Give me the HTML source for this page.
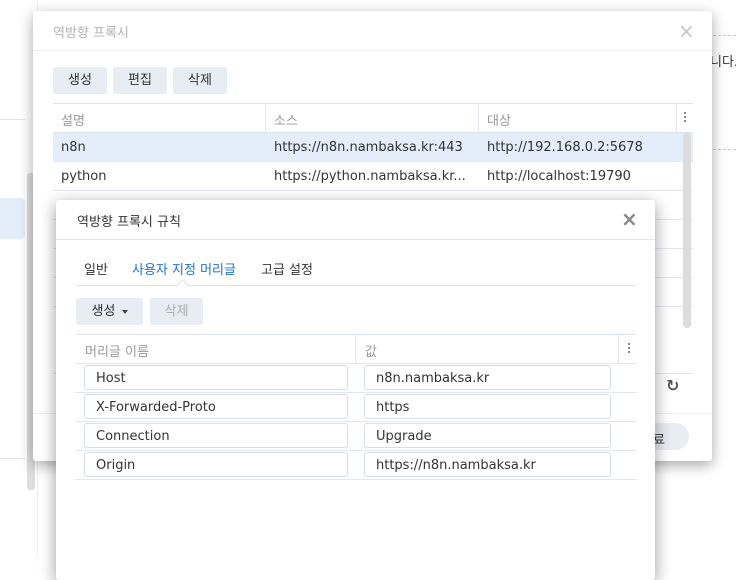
<!DOCTYPE html>
<html><head><meta charset="utf-8"><style>
*{box-sizing:border-box;margin:0;padding:0}
body{width:736px;height:557px;overflow:hidden;background:#fff;position:relative;font-family:"DejaVu Sans","Noto Sans CJK KR",sans-serif;font-size:13px;color:#333}
.a{position:absolute}
.btn{position:absolute;height:27px;background:#e8edf3;border-radius:3px;text-align:center;line-height:27px;font-size:13px;color:#333}
.hl{position:absolute;height:1px;background:#e3e8ee}
.vl{position:absolute;width:1px;background:#e3e8ee}
.inp{position:absolute;height:25px;border:1px solid #d5dde6;border-radius:3px;padding-left:11px;line-height:25px;font-size:13px;color:#333;background:#fff}
.txt{position:absolute;white-space:nowrap}
.dots{position:absolute;width:3px}
.dots i{display:block;width:2px;height:2px;background:#888;margin-bottom:2px}
</style></head><body>
<div class="vl" style="left:37px;top:0;height:557px;background:#eceff2"></div>
<div class="hl" style="left:0;top:119px;width:25px"></div>
<div class="a" style="left:0;top:198px;width:25px;height:41px;background:#e3eefa;border-radius:0 4px 4px 0"></div>
<div class="a" style="left:27px;top:173px;width:8px;height:317px;background:#ddd;border-radius:3px"></div>
<div class="hl" style="left:0;top:458px;width:25px"></div>
<div class="txt" style="left:710px;top:51px;color:#333">니다.</div>
<div class="a" style="left:713px;top:35px;width:23px;border-top:1px dashed #ccc"></div>
<div class="a" style="left:713px;top:149px;width:23px;border-top:1px dashed #ccc"></div>

<div class="a" style="left:33px;top:11px;width:679px;height:450px;background:#fff;border-radius:3px;box-shadow:0 4px 14px rgba(0,0,0,.35)">
  <div class="txt" style="left:20px;top:11px;color:#b0b0b0">역방향 프록시</div>
  <div class="txt" style="left:645px;top:8px;color:#c4c4c4;font-size:20px">×</div>
  <div class="hl" style="left:0;top:39px;width:679px;background:#eef1f4"></div>
  <div class="btn" style="left:20px;top:56px;width:54px">생성</div>
  <div class="btn" style="left:80px;top:56px;width:54px">편집</div>
  <div class="btn" style="left:140px;top:56px;width:54px">삭제</div>
  <div class="hl" style="left:20px;top:92px;width:640px;background:#dde3ea"></div>
  <div class="txt" style="left:28px;top:99px;color:#999">설명</div>
  <div class="txt" style="left:241px;top:99px;color:#999">소스</div>
  <div class="txt" style="left:454px;top:99px;color:#999">대상</div>
  <div class="dots" style="left:651px;top:101px"><i></i><i></i><i></i></div>
  <div class="vl" style="left:232px;top:92px;height:29px"></div>
  <div class="vl" style="left:445px;top:92px;height:29px"></div>
  <div class="vl" style="left:643px;top:92px;height:29px"></div>
  <div class="a" style="left:20px;top:121px;width:640px;height:29px;background:#e3eefa;border-top:1px solid #dde3ea"></div>
  <div class="txt" style="left:28px;top:129px">n8n</div>
  <div class="txt" style="left:241px;top:129px">https://n8n.nambaksa.kr:443</div>
  <div class="txt" style="left:454px;top:129px">http://192.168.0.2:5678</div>
  <div class="hl" style="left:20px;top:150px;width:640px"></div>
  <div class="txt" style="left:28px;top:158px">python</div>
  <div class="txt" style="left:241px;top:158px">https://python.nambaksa.kr...</div>
  <div class="txt" style="left:454px;top:158px">http://localhost:19790</div>
  <div class="hl" style="left:20px;top:179px;width:640px"></div>
  <div class="hl" style="left:20px;top:208px;width:640px"></div>
  <div class="hl" style="left:20px;top:237px;width:640px"></div>
  <div class="hl" style="left:20px;top:266px;width:640px"></div>
  <div class="hl" style="left:20px;top:295px;width:640px"></div>
  <div class="a" style="left:650px;top:122px;width:8px;height:195px;background:#dcdcdc;border-radius:4px"></div>
  <div class="hl" style="left:20px;top:362px;width:640px"></div>
  <div class="txt" style="left:633px;top:365px;font-size:16px;font-weight:bold;color:#555">↻</div>
  <div class="hl" style="left:0;top:402px;width:679px;background:#eef1f4"></div>
  <div class="a" style="left:560px;top:412px;width:96px;height:27px;background:#e8edf3;border-radius:14px"></div>
  <div class="txt" style="left:620px;top:418px">료</div>
</div>

<div class="a" style="left:56px;top:200px;width:599px;height:380px;background:#fff;border-radius:3px;box-shadow:0 4px 16px rgba(0,0,0,.4)">
  <div class="txt" style="left:21px;top:11px;color:#333">역방향 프록시 규칙</div>
  <div class="txt" style="left:565px;top:7px;color:#888;font-size:20px;font-weight:bold">×</div>
  <div class="hl" style="left:0;top:39px;width:599px;background:#e3e8ee"></div>
  <div class="txt" style="left:28px;top:59px;color:#333">일반</div>
  <div class="txt" style="left:76px;top:59px;color:#1a73d9">사용자 지정 머리글</div>
  <div class="txt" style="left:205px;top:59px;color:#333">고급 설정</div>
  <div class="hl" style="left:20px;top:85px;width:560px;background:#dde3ea"></div>
  <div class="a" style="left:122px;top:81px;width:9px;height:9px;background:#fff;border-left:1px solid #dde3ea;border-top:1px solid #dde3ea;transform:rotate(45deg)"></div>
  <div class="btn" style="left:20px;top:98px;width:67px">생성 <span style="display:inline-block;width:0;height:0;border-left:3px solid transparent;border-right:3px solid transparent;border-top:4px solid #444;vertical-align:middle;margin-left:2px"></span></div>
  <div class="btn" style="left:94px;top:98px;width:53px;color:#aaa">삭제</div>
  <div class="hl" style="left:20px;top:134px;width:560px;background:#dde3ea"></div>
  <div class="txt" style="left:29px;top:141px;color:#999">머리글 이름</div>
  <div class="txt" style="left:309px;top:141px;color:#999">값</div>
  <div class="dots" style="left:572px;top:143px"><i></i><i></i><i></i></div>
  <div class="vl" style="left:299px;top:134px;height:29px"></div>
  <div class="vl" style="left:562px;top:134px;height:29px"></div>
  <div class="hl" style="left:20px;top:163px;width:560px"></div>
  <div class="inp" style="left:28px;top:165px;width:264px">Host</div>
  <div class="inp" style="left:308px;top:165px;width:247px">n8n.nambaksa.kr</div>
  <div class="hl" style="left:20px;top:192px;width:560px"></div>
  <div class="inp" style="left:28px;top:194px;width:264px">X-Forwarded-Proto</div>
  <div class="inp" style="left:308px;top:194px;width:247px">https</div>
  <div class="hl" style="left:20px;top:221px;width:560px"></div>
  <div class="inp" style="left:28px;top:223px;width:264px">Connection</div>
  <div class="inp" style="left:308px;top:223px;width:247px">Upgrade</div>
  <div class="hl" style="left:20px;top:250px;width:560px"></div>
  <div class="inp" style="left:28px;top:252px;width:264px">Origin</div>
  <div class="inp" style="left:308px;top:252px;width:247px">https://n8n.nambaksa.kr</div>
  <div class="hl" style="left:20px;top:279px;width:560px"></div>
</div>
</body></html>
